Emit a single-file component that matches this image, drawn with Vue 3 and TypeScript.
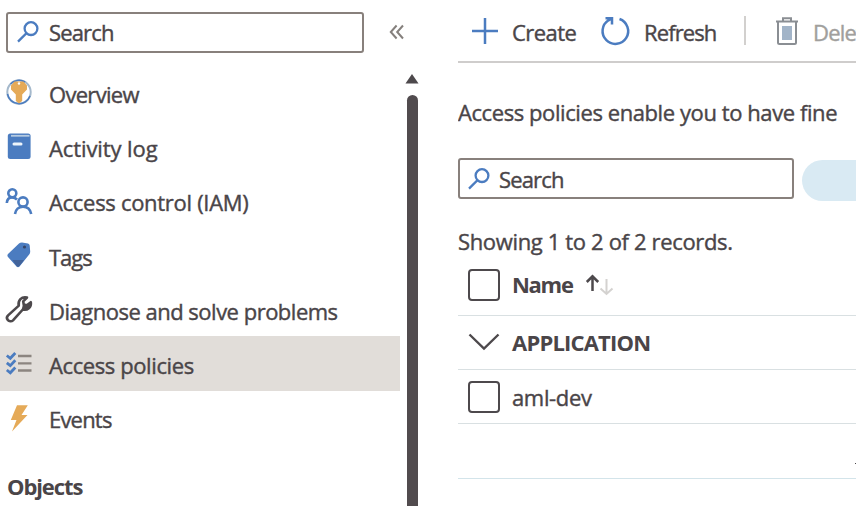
<script setup lang="ts">
interface MenuItem {
  label: string
  icon: string
  fit: string
  active?: boolean
}

const menu: MenuItem[] = [
  { label: 'Overview', icon: 'key', fit: 'fit-overview' },
  { label: 'Activity log', icon: 'book', fit: 'fit-activity' },
  { label: 'Access control (IAM)', icon: 'people', fit: 'fit-iam' },
  { label: 'Tags', icon: 'tag', fit: 'fit-tags' },
  { label: 'Diagnose and solve problems', icon: 'wrench', fit: 'fit-diagnose' },
  { label: 'Access policies', icon: 'checks', fit: 'fit-policies', active: true },
  { label: 'Events', icon: 'bolt', fit: 'fit-events' },
]
</script>

<template>
  <div class="page">
    <aside class="sidebar">
      <div class="side-top">
        <div class="search side-search">
          <svg class="magnifier" viewBox="0 0 24 24"><circle cx="15" cy="8.600" r="6.400" /><path d="M10.300 13.400 2 21.600" /></svg>
          <span>Search</span>
        </div>
        <svg class="collapse" viewBox="0 0 16 16"><path d="M7.600 1.500 1.800 8l5.800 6.500M14 1.500 8.200 8l5.800 6.500" /></svg>
      </div>
      <nav class="menu">
        <div v-for="item in menu" :key="item.label" class="item" :class="{ active: item.active }">
          <svg v-if="item.icon === 'key'" class="icon" viewBox="0 0 26 26">
            <circle cx="13" cy="13" r="11.700" fill="#fff" stroke="#a5b9cc" stroke-width="2" />
            <path d="M4.500 5A11.700 11.700 0 0 1 19 3M1.500 15A11.700 11.700 0 0 0 24 17" fill="none" stroke="#4b7cc0" stroke-width="1.500" />
            <path d="M8.500 2.500h9l3.500 4v4l-4.800 5V22L13 24.500 9.800 22v-6.500L5 10.500v-4z" fill="#e5aa58" />
            <circle cx="13" cy="4.500" r="1.200" fill="#fff" />
          </svg>
          <svg v-else-if="item.icon === 'book'" class="icon" viewBox="0 0 26 26">
            <rect x="1.800" y="0.500" width="22.800" height="25.500" rx="2.500" fill="#4b7cc0" />
            <path d="M5 2.800h18.500" stroke="#b5cbe1" stroke-width="1.800" />
            <path d="M8 11h7" stroke="#edf4fa" stroke-width="3" stroke-linecap="round" />
          </svg>
          <svg v-else-if="item.icon === 'people'" class="icon" viewBox="0 0 26 26">
            <g fill="none" stroke="#4b7cc0" stroke-width="2.600">
              <circle cx="6.300" cy="5.300" r="4" />
              <circle cx="17" cy="14" r="4.600" />
              <path d="M.8 15c.3-3.200 2.300-5.600 5.300-5.600 2 0 3.700.8 4.900 2.100M9 26c.6-4.200 3.600-7.200 8-7.200s7.400 3 8.200 7.200" />
            </g>
          </svg>
          <svg v-else-if="item.icon === 'tag'" class="icon" viewBox="0 0 26 26">
            <path d="M2 12 13 1.500Q14 .5 16 .5l6 1q1.500.3 1.700 2l.5 6q.1 1.500-1 3L13.500 24.500q-1.500 1.500-3 0L2 15q-1.200-1.500 0-3z" fill="#4b7cc0" />
            <path d="M6.500 18h11.500l-4.500 6q-1.500 1.500-3 0z" fill="#42639a" />
            <circle cx="18.500" cy="5" r="1.600" fill="#354568" />
          </svg>
          <svg v-else-if="item.icon === 'wrench'" class="icon" viewBox="0 0 26 26">
            <path d="M24.800 6.200c.9 5-3.500 8.500-8 7.300L7 24.300c-1.700 1.700-4 1-5.100-.2-1.200-1.300-1.200-3.300.2-4.700L12.800 9.600C11.600 4.500 15.600.2 21 1.500L17.200 5.300l.5 3.200 3.100.7z" fill="#fff" stroke="#4d494c" stroke-width="2.600" stroke-linejoin="round" />
            <path d="m20.500 9 4.300-3.500-.5 4.500-4 3.500-4.500-.500 1-4z" fill="#4d494c" />
          </svg>
          <svg v-else-if="item.icon === 'checks'" class="icon" viewBox="0 0 26 26">
            <path d="M12 5h13.500M12 12.300h13.500M12 19.500h13.500" stroke="#8c8580" stroke-width="2.300" />
            <path d="m.8 4.500 3.500 2.800 5-5.300M.8 11.800l3.500 2.800 5-5.300M.8 19l3.500 2.800 5-5.300" fill="none" stroke="#4b7cc0" stroke-width="2.800" />
          </svg>
          <svg v-else class="icon" viewBox="0 0 26 26">
            <path d="M11 .3h10.800L15.500 10h6L6 26.500 10.500 15H4.800z" fill="#e5aa58" />
          </svg>
          <span :class="item.fit">{{ item.label }}</span>
        </div>
      </nav>
      <div class="group">Objects</div>
    </aside>

    <div class="scroll">
      <svg class="scroll-up" viewBox="0 0 14 11"><path d="M7 1 13.500 10.500H.5z" /></svg>
      <div class="thumb"></div>
    </div>

    <main class="main">
      <div class="toolbar">
        <svg class="plus" viewBox="0 0 28 28"><path d="M14 1v26M1 14h26" /></svg>
        <span class="create">Create</span>
        <svg class="refresh" viewBox="0 0 30 30"><path d="M18.500 3A12.800 12.800 0 1 1 7.500 4.300L10.800 2.500M4.500 2.200H11V8.500" /></svg>
        <span class="refresh-text">Refresh</span>
        <i class="divider"></i>
        <svg class="trash" viewBox="0 0 24 30">
          <path d="M1 5.500h22M8 5V2.300h8V5M3 6v20.500q0 1.500 1.500 1.500h15q1.500 0 1.500-1.500V6" fill="none" stroke="#8a8e93" stroke-width="2" />
          <rect x="7" y="10" width="10" height="14" fill="#a2b4c8" />
        </svg>
        <span class="delete">Delete</span>
      </div>
      <p class="intro">Access policies enable you to have fine</p>
      <div class="filters">
        <div class="search main-search">
          <svg class="magnifier" viewBox="0 0 24 24"><circle cx="15" cy="8.600" r="6.400" /><path d="M10.300 13.400 2 21.600" /></svg>
          <span>Search</span>
        </div>
        <div class="pill"></div>
      </div>
      <p class="count">Showing 1 to 2 of 2 records.</p>
      <div class="row head">
        <i class="check"></i>
        <b class="name">Name</b>
        <svg class="sort" viewBox="0 0 30 22">
          <path d="M7.500 17V2.500M1.800 8l5.700-5.700L13.200 8" stroke="#4d494c" stroke-width="2.500" />
          <path d="M21.500 5v15M15.500 14.500l6 5.500 6-5.500" stroke="#d4d2d0" stroke-width="2" />
        </svg>
      </div>
      <div class="row section">
        <svg class="chevron" viewBox="0 0 32 18"><path d="m1.500 1.500 14.500 14 14.500-14" /></svg>
        <b class="application">APPLICATION</b>
      </div>
      <div class="row entry">
        <i class="check"></i>
        <span class="entry-name">aml-dev</span>
      </div>
      <div class="row blank"><i class="speck"></i></div>
    </main>
  </div>
</template>

<style>
body {
  margin: 0;
  background: #fff;
  overflow: hidden;
}
</style>

<style scoped>
.page {
  display: flex;
  width: 856px;
  height: 506px;
  overflow: hidden;
  color: #4a4548;
  font: 400 22px/30px "Open Sans", "Noto Sans", sans-serif;
  -webkit-text-stroke: 0.4px;
  white-space: nowrap;
}
svg { flex: none; overflow: visible; }
span, b { flex: none; }
b, .group { -webkit-text-stroke: 0; }
.sidebar { width: 400px; flex: none; }
.side-top {
  display: flex;
  align-items: center;
  box-sizing: border-box;
  height: 65px;
  padding: 0 0 1px 6px;
}
.search {
  display: flex;
  flex: none;
  align-items: center;
  box-sizing: border-box;
  border: 2px solid #88807c;
  border-radius: 3px;
  letter-spacing: -0.85px;
}
.side-search { width: 358px; height: 41px; padding-left: 8px; }
.magnifier {
  width: 24px;
  height: 24px;
  margin-right: 9px;
  fill: none;
  stroke: #4b7cc0;
  stroke-width: 2.3;
}
.main-search .magnifier { margin-right: 8px; }
.collapse {
  width: 16px;
  height: 16px;
  margin-left: 25px;
  fill: none;
  stroke: #85807d;
  stroke-width: 2;
}
.item {
  display: flex;
  align-items: center;
  gap: 17px;
  height: 54.3px;
  padding: 0 0 0 6px;
  box-sizing: border-box;
}
.item.active { background: #e1ddd9; }
.item span { padding-top: 3px; }
.fit-overview { letter-spacing: -0.7px; }
.fit-activity { letter-spacing: -0.1px; }
.fit-iam { letter-spacing: -0.3px; }
.fit-tags { letter-spacing: -1px; }
.fit-diagnose { letter-spacing: -0.5px; }
.fit-policies { letter-spacing: -0.4px; }
.fit-events { letter-spacing: -0.8px; }
.icon { width: 26px; height: 26px; }
.group { padding: 26px 0 0 7px; font-weight: 700; letter-spacing: -1.1px; }
.scroll {
  display: flex;
  flex-direction: column;
  align-items: center;
  flex: none;
  width: 24px;
  padding-top: 73px;
}
.scroll-up { width: 14px; height: 11px; fill: #4d494c; }
.thumb {
  flex: 1;
  width: 11px;
  margin-top: 11px;
  border-radius: 6px 6px 0 0;
  background: #514b4e;
}
.main { flex: none; width: 398px; margin-left: 34px; overflow: hidden; }
.main { margin-left: 34px; }
.toolbar {
  display: flex;
  align-items: center;
  box-sizing: border-box;
  height: 63px;
  padding-left: 13px;
  border-bottom: 2px solid #cfcdcc;
}
.plus, .refresh { fill: none; stroke: #4b7cc0; stroke-width: 2.5; }
.plus { width: 28px; height: 28px; }
.create { margin-left: 13px; width: 89px; padding-top: 3px; letter-spacing: -0.55px; }
.refresh { width: 30px; height: 30px; }
.refresh-text { margin-left: 13px; width: 100px; padding-top: 3px; letter-spacing: -0.9px; }
.divider { flex: none; width: 2px; height: 29px; background: #d2d0ce; }
.trash { width: 24px; height: 30px; margin-left: 29px; }
.delete { margin-left: 14px; padding-top: 3px; color: #a19f9d; letter-spacing: -0.8px; }
.intro { margin: 34px 0 0; letter-spacing: -0.42px; }
.filters { display: flex; gap: 8px; margin-top: 31px; }
.main-search { flex: none; width: 336px; height: 41px; padding-left: 7px; }
.pill {
  flex: none;
  width: 100px;
  height: 41px;
  margin-top: 2px;
  border-radius: 21px;
  background: #d9eaf3;
}
.count { margin: 25px 0 0; letter-spacing: -0.35px; }
.row {
  display: flex;
  align-items: center;
  box-sizing: border-box;
  padding-left: 10px;
  border-bottom: 1px solid #d9e0e2;
}
.head { height: 60px; padding-bottom: 2px; }
.section, .entry { height: 54px; }
.section { padding-bottom: 1px; }
.blank { height: 55px; justify-content: flex-end; border-color: #d3e4ea; }
.speck { width: 1px; height: 1px; margin-top: 24px; background: #4d494c; }
.check {
  flex: none;
  box-sizing: border-box;
  width: 32px;
  height: 32px;
  border: 2px solid #4d494c;
  border-radius: 4px;
}
.name, .entry-name, .application { margin-left: 12px; }
.name { letter-spacing: -1.3px; margin-top: -2px; }
.application { letter-spacing: -0.8px; }
.entry-name { letter-spacing: -0.35px; }
.sort { width: 30px; height: 22px; margin-left: 12px; fill: none; }
.chevron { width: 32px; height: 18px; fill: none; stroke: #4d494c; stroke-width: 2.4; }
</style>
